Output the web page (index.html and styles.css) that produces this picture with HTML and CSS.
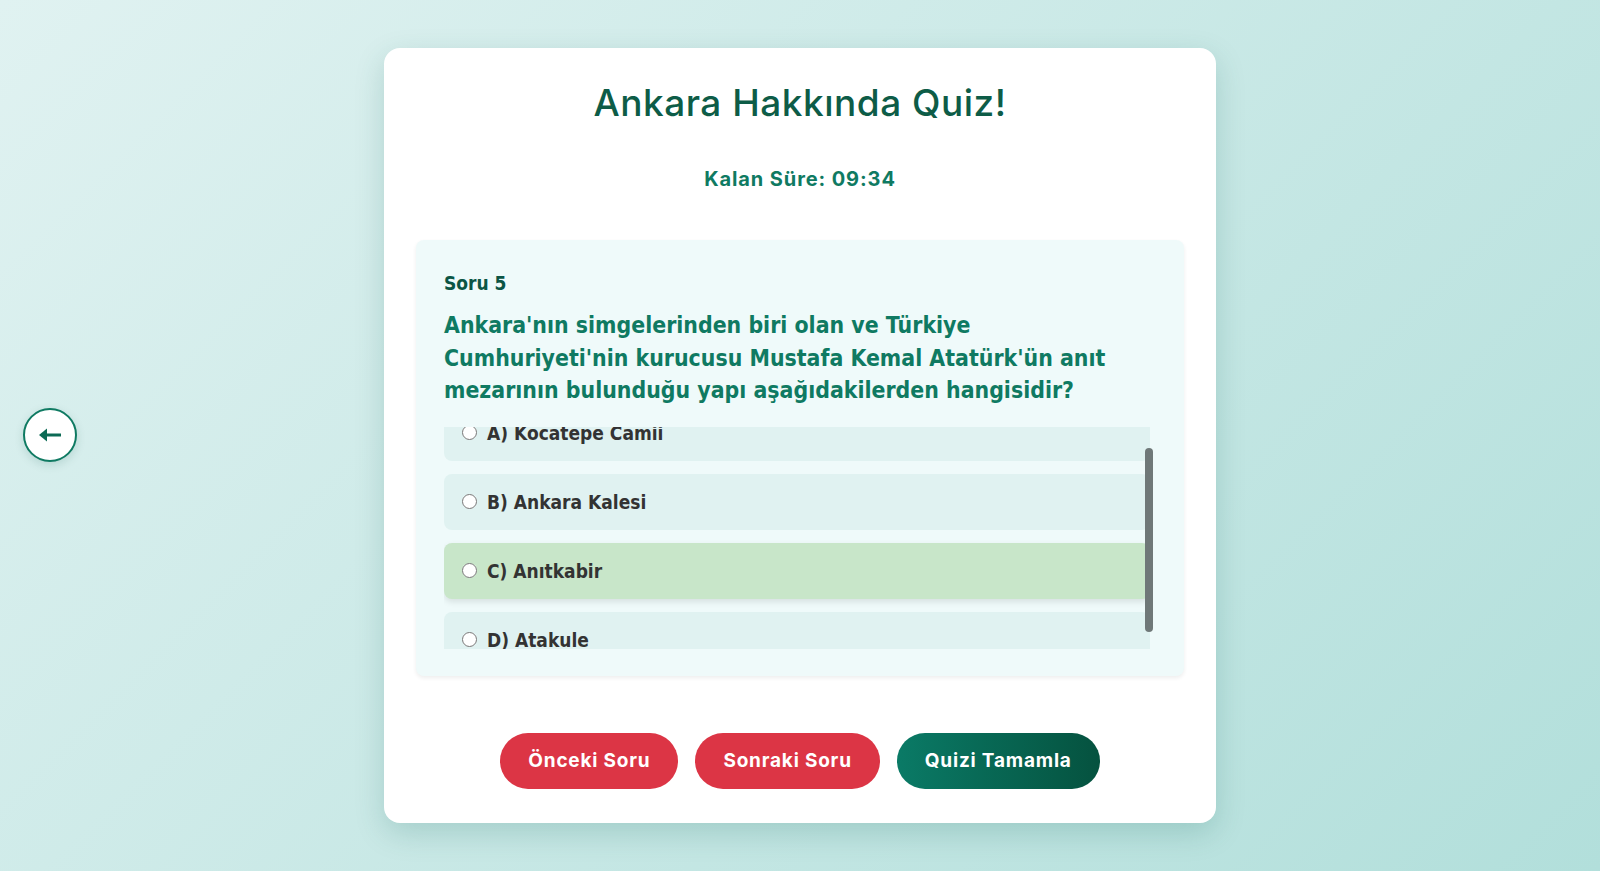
FILE: index.html
```html
<!DOCTYPE html>
<html lang="tr">
<head>
<meta charset="utf-8">
<title>Ankara Hakkında Quiz!</title>
<link rel="stylesheet" href="styles.css">
</head>
<body>
<button class="back-btn" aria-label="Geri">
  <svg width="26" height="26" viewBox="0 0 26 26">
    <line x1="8" y1="13" x2="24" y2="13" stroke="#0c6a55" stroke-width="3"/>
    <polygon points="2,13 10,6.5 10,19.5" fill="#0c6a55"/>
  </svg>
</button>
<main class="quiz-card">
  <h1 class="quiz-title">Ankara Hakkında Quiz!</h1>
  <div class="timer">Kalan Süre: 09:34</div>
  <section class="question-box">
    <div class="question-number">Soru 5</div>
    <div class="question-text">Ankara'nın simgelerinden biri olan ve Türkiye Cumhuriyeti'nin kurucusu Mustafa Kemal Atatürk'ün anıt mezarının bulunduğu yapı aşağıdakilerden hangisidir?</div>
    <div class="options-wrap">
      <div class="options" id="options">
        <label class="option"><input type="radio" name="q5"><span>A) Kocatepe Camii</span></label>
        <label class="option"><input type="radio" name="q5"><span>B) Ankara Kalesi</span></label>
        <label class="option selected"><input type="radio" name="q5"><span>C) Anıtkabir</span></label>
        <label class="option"><input type="radio" name="q5"><span>D) Atakule</span></label>
      </div>
      <div class="scroll-thumb"></div>
    </div>
  </section>
  <div class="actions">
    <button class="btn btn-red">Önceki Soru</button>
    <button class="btn btn-red">Sonraki Soru</button>
    <button class="btn btn-green">Quizi Tamamla</button>
  </div>
</main>
<script src="script.js"></script>
</body>
</html>
```
FILE: styles.css
```css
* { box-sizing: border-box; }
html, body { height: 100%; }
body {
  margin: 0;
  min-height: 100vh;
  display: flex;
  align-items: center;
  justify-content: center;
  background: linear-gradient(135deg, #e0f2f1 0%, #b2dfdb 100%);
  font-family: "DejaVu Sans", Verdana, sans-serif;
}
.back-btn {
  position: fixed;
  left: 23px;
  top: 408px;
  width: 54px;
  height: 54px;
  border-radius: 50%;
  border: 2px solid #0f7a62;
  background: #fff;
  display: flex;
  align-items: center;
  justify-content: center;
  padding: 0;
  box-shadow: 0 3px 10px rgba(0, 80, 70, 0.15);
}
.quiz-card {
  width: 832px;
  background: #fff;
  border-radius: 16px;
  padding: 33px 32px 34px;
  box-shadow: 0 10px 30px rgba(0, 90, 80, 0.18);
}
.quiz-title {
  margin: 0;
  text-align: center;
  font-family: Inter, "Open Sans", sans-serif;
  font-weight: 500;
  font-size: 37px;
  letter-spacing: 0.5px;
  line-height: 44px;
  color: #0d5c47;
}
.timer {
  margin-top: 42px;
  text-align: center;
  font-family: Inter, "Open Sans", sans-serif;
  font-weight: 700;
  font-size: 20px;
  letter-spacing: 0.9px;
  line-height: 24px;
  color: #0f7a62;
}
.question-box {
  margin-top: 49px;
  background: #effafa;
  border-radius: 8px;
  padding: 29px 28px 27px;
  box-shadow: 0 2px 4px rgba(0, 0, 0, 0.07);
}
.question-number {
  font-family: "DejaVu Sans Condensed", "DejaVu Sans", sans-serif;
  font-weight: 700;
  font-size: 19px;
  line-height: 28px;
  color: #0b5545;
}
.question-text {
  margin-top: 12px;
  font-family: "DejaVu Sans Condensed", "DejaVu Sans", sans-serif;
  font-weight: 700;
  font-size: 22.85px;
  line-height: 32.5px;
  color: #0f7a62;
}
.options-wrap {
  position: relative;
  margin-top: 20px;
}
.options {
  margin-right: 6px;
  height: 222px;
  overflow-y: auto;
  display: flex;
  flex-direction: column;
  gap: 13px;
  padding-bottom: 13px;
  scrollbar-width: none;
}
.options::-webkit-scrollbar { width: 0; height: 0; }
.scroll-thumb {
  position: absolute;
  right: 3px;
  top: 21px;
  width: 8px;
  height: 184px;
  border-radius: 4px;
  background: #6f7878;
}
.option {
  flex: 0 0 56px;
  display: flex;
  align-items: center;
  padding: 0 15px;
  background: #e0f2f1;
  border-radius: 8px;
  font-family: "DejaVu Sans Condensed", "DejaVu Sans", sans-serif;
  font-weight: 700;
  font-size: 19px;
  color: #333;
}
.option input {
  margin: 0 10px 0 3px;
  width: 15px;
  height: 15px;
}
.option.selected {
  background: #c8e6c9;
  box-shadow: 0 3px 6px rgba(0, 0, 0, 0.1);
}
.actions {
  margin-top: 57px;
  display: flex;
  justify-content: center;
  gap: 17px;
}
.btn {
  height: 56px;
  padding: 0 28px;
  border: none;
  border-radius: 28px;
  font-family: Inter, "Open Sans", sans-serif;
  font-weight: 700;
  font-size: 19px;
  letter-spacing: 0.8px;
  color: #fff;
}
.btn-red { background: #dc3545; }
.btn-green { background: linear-gradient(90deg, #0a7a66 0%, #05523f 100%); }
```
FILE: script.js
```js
document.getElementById('options').scrollTop = 22;
```
